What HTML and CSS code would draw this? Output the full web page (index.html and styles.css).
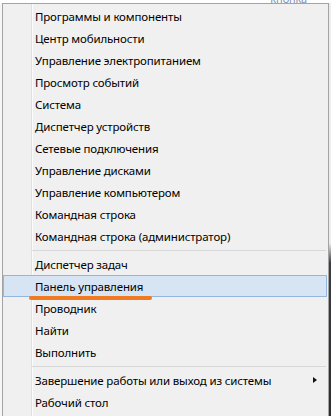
FILE: index.html
```html
<!DOCTYPE html>
<html lang="ru">
<head>
<meta charset="utf-8">
<title>Меню Win+X</title>
<link rel="stylesheet" href="styles.css">
</head>
<body>
<div class="screen">
  <div class="top-strip"><span class="clip-text">кнопка</span></div>
  <div class="row">
    <div class="edge-left"></div>
    <nav class="menu">
      <ul class="group">
        <li class="item">Программы и компоненты</li>
        <li class="item">Центр мобильности</li>
        <li class="item">Управление электропитанием</li>
        <li class="item">Просмотр событий</li>
        <li class="item">Система</li>
        <li class="item">Диспетчер устройств</li>
        <li class="item">Сетевые подключения</li>
        <li class="item">Управление дисками</li>
        <li class="item">Управление компьютером</li>
        <li class="item">Командная строка</li>
        <li class="item">Командная строка (администратор)</li>
      </ul>
      <div class="sep"></div>
      <ul class="group">
        <li class="item">Диспетчер задач</li>
        <li class="item item-hover">Панель управления<span class="mark"></span></li>
        <li class="item">Проводник</li>
        <li class="item">Найти</li>
        <li class="item">Выполнить</li>
      </ul>
      <div class="sep"></div>
      <ul class="group">
        <li class="item">Завершение работы или выход из системы<span class="arrow"></span></li>
        <li class="item">Рабочий стол</li>
      </ul>
    </nav>
    <div class="edge-right"></div>
  </div>
</div>
</body>
</html>
```

FILE: styles.css
```css
html, body {
  margin: 0;
  padding: 0;
  height: 100%;
  overflow: hidden;
  background: #ffffff;
}

.screen {
  display: flex;
  flex-direction: column;
  height: 416px;
  font-family: "Noto Sans", "Open Sans", sans-serif;
  font-size: 11.5px;
  letter-spacing: -0.15px;
  color: #000;
}

.top-strip {
  height: 3px;
  overflow: hidden;
  display: flex;
  justify-content: flex-end;
  align-items: flex-end;
  padding-right: 24px;
  background: #fff;
}

.clip-text {
  font-size: 11px;
  line-height: 9px;
  color: #7f8fae;
  flex: none;
}

.row {
  display: flex;
  flex: 1;
  min-height: 0;
}

.edge-left {
  width: 2px;
  flex: none;
  background: #f6f6f6;
}

.edge-right {
  width: 2px;
  flex: none;
  background: linear-gradient(to bottom, #eeeeee 0, #eeeeee 240px, #3b3d42 260px, #2b2c30 100%);
}

.menu {
  width: 327px;
  flex: none;
  box-sizing: border-box;
  border: 1px solid #a3a3a3;
  border-bottom: none;
  padding: 1px 1px 0 0;
  background-color: #f0f0f0;
  background-image: linear-gradient(to right, transparent 28px, #e0e0e0 28px, #e0e0e0 29px, #fcfcfc 29px, #fcfcfc 30px, transparent 30px);
}

.group {
  list-style: none;
  margin: 0;
  padding: 0;
}

.item {
  position: relative;
  display: flex;
  align-items: center;
  height: 22px;
  box-sizing: border-box;
  padding: 0 10px 0 32px;
  white-space: nowrap;
}

.item-hover {
  background: #d6e4f4;
  border: 1px solid #93b5de;
  padding-left: 31px;
}

.mark {
  position: absolute;
  left: 25px;
  top: 20px;
  width: 123px;
  height: 4px;
  border-radius: 2px;
  background: #f07a22;
}

.arrow {
  margin-left: auto;
  width: 0;
  height: 0;
  border-left: 4px solid #111;
  border-top: 3.5px solid transparent;
  border-bottom: 3.5px solid transparent;
}

.sep {
  height: 6px;
  box-sizing: border-box;
  padding-top: 3px;
  margin: 0 1px 0 28px;
}

.sep::before {
  content: "";
  display: block;
  height: 1px;
  background: #d8d8d8;
}
```
